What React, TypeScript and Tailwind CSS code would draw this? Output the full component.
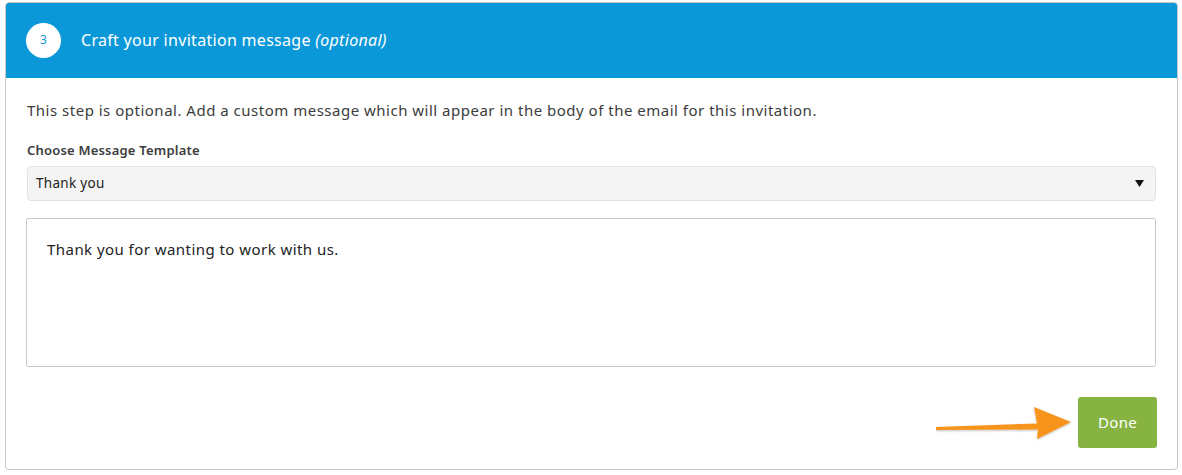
import React from "react";

export default function App() {
  return (
    <div className="w-[1182px] h-[475px] bg-white pt-[2px] pl-[5px] pr-[4px]" style={{ fontFamily: '"Noto Sans", "Open Sans", sans-serif' }}>
      <div className="rounded-[4px] border border-[#c7c7c7] h-[468px] flex flex-col overflow-hidden">
        <div className="h-[76px] bg-[#0b98d8] flex items-center pl-[21px] -mx-px -mt-px rounded-t-[4px] shrink-0">
          <div className="w-[35px] h-[35px] rounded-full bg-white flex items-center justify-center text-[#0b98d8] text-[12px]">3</div>
          <div className="ml-[20px] text-white text-[16px] tracking-[0.3px]">
            Craft your invitation message <span className="italic">(optional)</span>
          </div>
        </div>
        <div className="px-[21px] flex flex-col">
          <p className="mt-[21px] text-[15px] text-[#3c3c3c] leading-[22px] tracking-[0.5px]">
            This step is optional. Add a custom message which will appear in the body of the email for this invitation.
          </p>
          <label className="mt-[20px] text-[13px] font-semibold text-[#3c3c3c] leading-[18px] tracking-[0.2px]">Choose Message Template</label>
          <div className="mt-[7px] h-[35px] rounded-[4px] border border-[#e2e2e2] bg-[#f4f4f4] flex items-center justify-between pl-[8px] pr-[11px]">
            <span className="text-[13.5px] text-[#222] tracking-[0.3px]">Thank you</span>
            <svg width="9" height="7" viewBox="0 0 9 7"><path d="M0 0 L9 0 L4.5 7 Z" fill="#111" /></svg>
          </div>
          <div className="mt-[17px] h-[149px] border border-[#c9c9c9] rounded-[2px] px-[20px] pt-[18px] -ml-px">
            <span className="text-[15px] text-[#222] tracking-[0.45px]">Thank you for wanting to work with us.</span>
          </div>
          <div className="mt-[30px] flex justify-end items-center">
            <svg width="140" height="40" viewBox="5 0 140 40" className="mr-[2px]">
              <defs>
                <filter id="sh" x="-10%" y="-30%" width="120%" height="160%">
                  <feDropShadow dx="0" dy="1" stdDeviation="1" floodColor="#000" floodOpacity="0.25" />
                </filter>
              </defs>
              <path d="M5 24 L106 20.5 L103 4 L140 19 L106 36 L107 26.5 L5 27 Z" fill="#f7941d" filter="url(#sh)" />
            </svg>
            <button className="w-[79px] h-[51px] rounded-[3px] bg-[#86b342] text-white text-[15px] tracking-[0.3px] -mr-px">Done</button>
          </div>
        </div>
      </div>
    </div>
  );
}
